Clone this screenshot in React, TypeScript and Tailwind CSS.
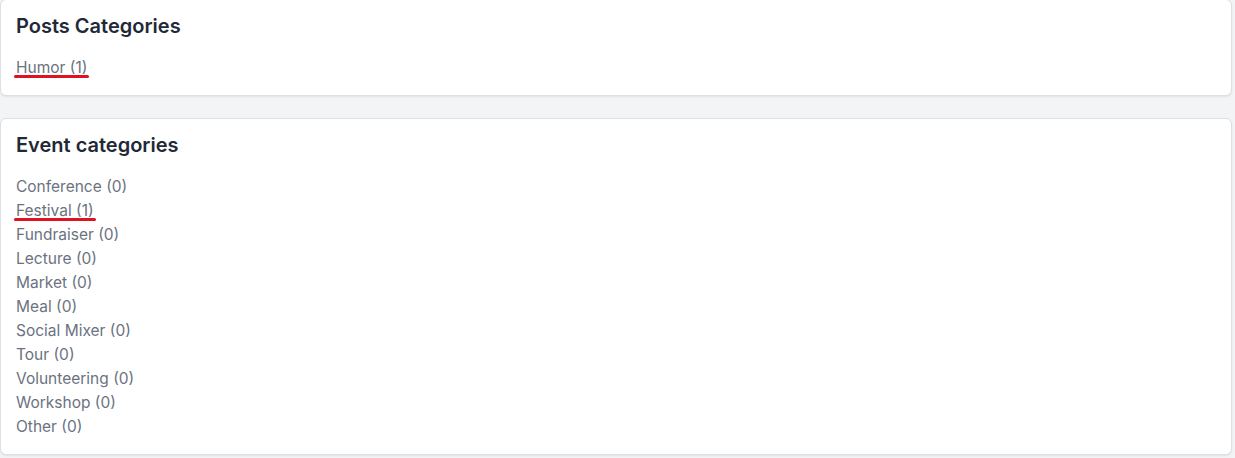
const POST_CATEGORIES = [{ name: "Humor", count: 1, marked: true }];

const EVENT_CATEGORIES = [
  { name: "Conference", count: 0 },
  { name: "Festival", count: 1, marked: true },
  { name: "Fundraiser", count: 0 },
  { name: "Lecture", count: 0 },
  { name: "Market", count: 0 },
  { name: "Meal", count: 0 },
  { name: "Social Mixer", count: 0 },
  { name: "Tour", count: 0 },
  { name: "Volunteering", count: 0 },
  { name: "Workshop", count: 0 },
  { name: "Other", count: 0 },
];

type Category = { name: string; count: number; marked?: boolean };

function CategoryCard({ title, items, className = "" }: { title: string; items: Category[]; className?: string }) {
  return (
    <div
      className={`rounded-md border border-[#dcdfe3] bg-white p-[15px] shadow-[0_1px_2px_rgba(0,0,0,0.08)] ${className}`}
    >
      <h2 className="text-[20px] leading-[22px] font-semibold text-[#1f2937]">{title}</h2>
      <ul className="mt-[19px]">
        {items.map((item) => (
          <li key={item.name} className="text-[15.5px] leading-[24px] text-[#6b7280]">
            <span className="relative inline-block">
              {item.name} ({item.count})
              {item.marked && (
                <span className="absolute left-[-2px] right-[-2px] top-[19px] h-[3px] rounded-full bg-[#e0121f]" />
              )}
            </span>
          </li>
        ))}
      </ul>
    </div>
  );
}

export default function App() {
  return (
    <div
      className="min-h-[458px] w-[1235px] overflow-hidden bg-[#f3f4f6] pr-[3px]"
      style={{ fontFamily: "Inter, 'Noto Sans', sans-serif" }}
    >
      <CategoryCard title="Posts Categories" items={POST_CATEGORIES} className="-mt-[1px]" />
      <CategoryCard title="Event categories" items={EVENT_CATEGORIES} className="mt-[22px]" />
    </div>
  );
}
